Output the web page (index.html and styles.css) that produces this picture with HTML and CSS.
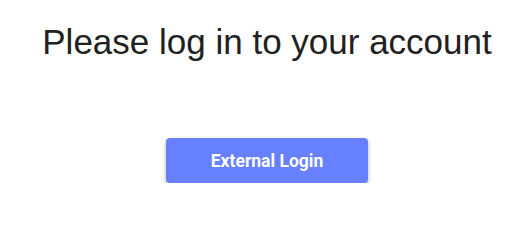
FILE: index.html
```html
<!DOCTYPE html>
<html lang="en">
<head>
<meta charset="utf-8">
<title>Login</title>
<link rel="stylesheet" href="styles.css">
</head>
<body>
<main class="login">
  <h1 class="login-title">Please log in to your account</h1>
  <div class="login-actions">
    <button class="login-button" type="button">External Login</button>
  </div>
</main>
</body>
</html>
```

FILE: styles.css
```css
html, body {
  margin: 0;
  padding: 0;
  background: #ffffff;
}
.login {
  display: flex;
  flex-direction: column;
  align-items: center;
  padding: 22px 0 0 4px;
}
.login-title {
  margin: 0;
  font-family: "Liberation Sans", Arial, sans-serif;
  font-weight: 400;
  font-size: 35px;
  line-height: 40px;
  color: #212121;
}
.login-actions {
  margin-top: 76px;
}
.login-button {
  width: 202px;
  height: 45px;
  border: none;
  border-radius: 4px;
  background: #6680ff;
  color: #ffffff;
  font-family: Roboto, "Liberation Sans", sans-serif;
  font-weight: 700;
  font-size: 17.5px;
  box-shadow: 0 2px 4px rgba(0, 0, 0, 0.3);
  cursor: pointer;
}
```
